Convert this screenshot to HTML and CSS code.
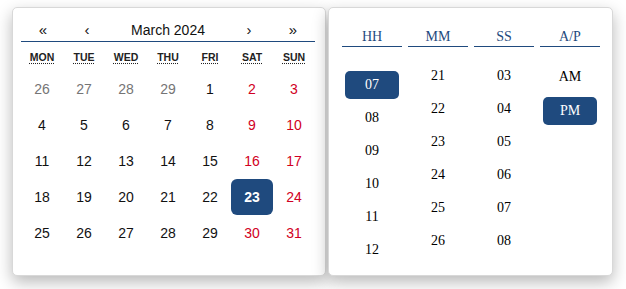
FILE: index.html
```html
<html>
    <head>
        <link rel="stylesheet" href="styles.css">
    </head>
    <body>
        <div class="picker">
            <div class="card calendar">
                <div class="nav">
                    <button class="nav-arrow">«</button>
                    <button class="nav-arrow">‹</button>
                    <span class="nav-label">March 2024</span>
                    <button class="nav-arrow">›</button>
                    <button class="nav-arrow">»</button>
                </div>
                <div class="weekdays">
                    <div><abbr title="Monday">Mon</abbr></div>
                    <div><abbr title="Tuesday">Tue</abbr></div>
                    <div><abbr title="Wednesday">Wed</abbr></div>
                    <div><abbr title="Thursday">Thu</abbr></div>
                    <div><abbr title="Friday">Fri</abbr></div>
                    <div><abbr title="Saturday">Sat</abbr></div>
                    <div><abbr title="Sunday">Sun</abbr></div>
                </div>
                <div class="days">
                    <button class="tile other">26</button>
                    <button class="tile other">27</button>
                    <button class="tile other">28</button>
                    <button class="tile other">29</button>
                    <button class="tile">1</button>
                    <button class="tile weekend">2</button>
                    <button class="tile weekend">3</button>

                    <button class="tile">4</button>
                    <button class="tile">5</button>
                    <button class="tile">6</button>
                    <button class="tile">7</button>
                    <button class="tile">8</button>
                    <button class="tile weekend">9</button>
                    <button class="tile weekend">10</button>

                    <button class="tile">11</button>
                    <button class="tile">12</button>
                    <button class="tile">13</button>
                    <button class="tile">14</button>
                    <button class="tile">15</button>
                    <button class="tile weekend">16</button>
                    <button class="tile weekend">17</button>

                    <button class="tile">18</button>
                    <button class="tile">19</button>
                    <button class="tile">20</button>
                    <button class="tile">21</button>
                    <button class="tile">22</button>
                    <button class="tile weekend active">23</button>
                    <button class="tile weekend">24</button>

                    <button class="tile">25</button>
                    <button class="tile">26</button>
                    <button class="tile">27</button>
                    <button class="tile">28</button>
                    <button class="tile">29</button>
                    <button class="tile weekend">30</button>
                    <button class="tile weekend">31</button>
                </div>
            </div>

            <div class="card time">
                <div class="time-col">
                    <div class="time-head">HH</div>
                    <div class="time-list hours">
                        <div class="time-item selected">07</div>
                        <div class="time-item">08</div>
                        <div class="time-item">09</div>
                        <div class="time-item">10</div>
                        <div class="time-item">11</div>
                        <div class="time-item">12</div>
                    </div>
                </div>
                <div class="time-col">
                    <div class="time-head">MM</div>
                    <div class="time-list">
                        <div class="time-item">21</div>
                        <div class="time-item">22</div>
                        <div class="time-item">23</div>
                        <div class="time-item">24</div>
                        <div class="time-item">25</div>
                        <div class="time-item">26</div>
                    </div>
                </div>
                <div class="time-col">
                    <div class="time-head">SS</div>
                    <div class="time-list">
                        <div class="time-item">03</div>
                        <div class="time-item">04</div>
                        <div class="time-item">05</div>
                        <div class="time-item">06</div>
                        <div class="time-item">07</div>
                        <div class="time-item">08</div>
                    </div>
                </div>
                <div class="time-col">
                    <div class="time-head">A/P</div>
                    <div class="time-list ampm">
                        <div class="time-item">AM</div>
                        <div class="time-item selected">PM</div>
                    </div>
                </div>
            </div>
        </div>
    </body>
</html>
```

FILE: styles.css
```css
body
{
    margin: 0;
    background: white;
}
.picker
{
    display: flex;
    align-items: stretch;
    gap: 2px;
    padding: 7px 0 0 12px;
}
.card
{
    box-sizing: border-box;
    height: 269px;
    background: white;
    border: 1px solid #d8d8d8;
    border-radius: 5px;
    box-shadow: 0 6px 16px rgba(0, 0, 0, 0.28);
}

/* calendar */
.calendar
{
    width: 314px;
    padding: 10px 10px 0 8px;
    font-family: "Liberation Sans", Arial, sans-serif;
    font-size: 14px;
}
.nav
{
    display: flex;
    height: 23px;
    align-items: center;
    border-bottom: 1px solid #1f4a7e;
}
.nav-arrow
{
    width: 44px;
    padding: 0;
    border: none;
    background: none;
    font-family: inherit;
    font-size: 15px;
    color: #111;
}
.nav-label
{
    flex: 1;
    text-align: center;
    font-size: 14px;
    color: #111;
}
.weekdays
{
    display: grid;
    grid-template-columns: repeat(7, 42px);
    height: 29px;
    align-items: center;
    text-align: center;
    font-size: 10.5px;
    font-weight: bold;
    text-transform: uppercase;
    color: #222;
}
.weekdays abbr
{
    text-decoration: underline dotted;
    text-underline-offset: 2px;
}
.days
{
    display: grid;
    grid-template-columns: repeat(7, 42px);
    grid-auto-rows: 36px;
}
.tile
{
    padding: 0;
    border: none;
    border-radius: 6px;
    background: none;
    font-family: inherit;
    font-size: 14px;
    color: #111;
}
.tile.weekend
{
    color: #d10023;
}
.tile.other
{
    color: #757575;
}
.tile.active
{
    background: #1f4a7e;
    color: white;
    font-weight: bold;
}

/* time */
.time
{
    width: 285px;
    display: flex;
    gap: 6px;
    padding: 20px 12px 0 13px;
    font-family: "Liberation Serif", "Times New Roman", serif;
    font-size: 14px;
}
.time-col
{
    width: 60px;
}
.time-head
{
    line-height: 18px;
    padding-bottom: 0;
    border-bottom: 1px solid #1f4a7e;
    text-align: center;
    color: #1f4a7e;
}
.time-list
{
    margin-top: 15px;
}
.time-list.hours
{
    padding-top: 9px;
}
.time-item
{
    height: 28px;
    line-height: 28px;
    margin: 0 3px 5px;
    border-radius: 5px;
    text-align: center;
    color: #000;
}
.ampm .time-item
{
    margin-bottom: 6px;
}
.ampm
{
    padding-top: 1px;
}
.time-item.selected
{
    background: #1f4a7e;
    color: white;
}
```
